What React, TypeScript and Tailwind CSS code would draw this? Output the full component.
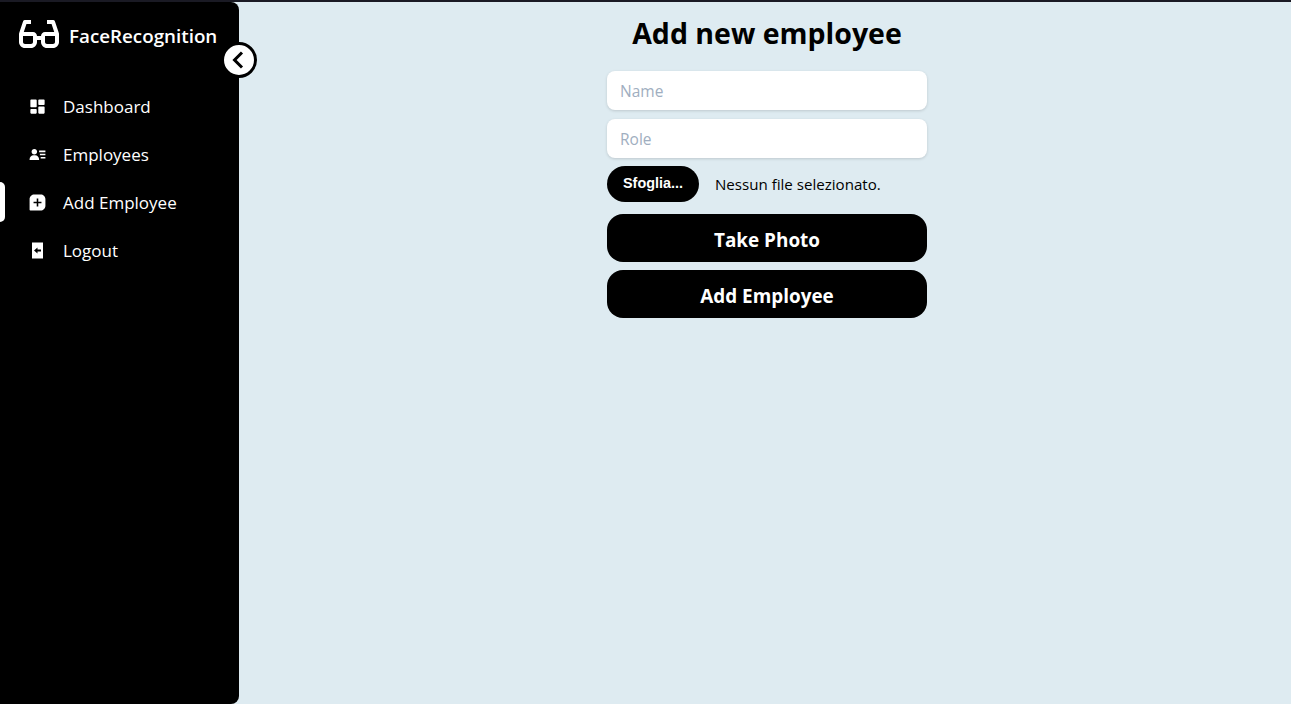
import { BiChevronLeft, BiGlassesAlt, BiSolidDashboard, BiSolidMessageSquareAdd, BiSolidUserDetail } from 'react-icons/bi';

// white door with the arrow cut out, react-icons has no exact match
function LogoutIcon({ className }: { className?: string }) {
  return (
    <svg viewBox="0 0 19 19" className={className}>
      <rect x="4" y="1.5" width="11" height="16" fill="currentColor" />
      <path d="M6 9.5 9.5 6.5V8.6H13V10.4H9.5V12.5Z" fill="#000" />
    </svg>
  );
}

const navItems = [
  { label: 'Dashboard', icon: BiSolidDashboard },
  { label: 'Employees', icon: BiSolidUserDetail },
  { label: 'Add Employee', icon: BiSolidMessageSquareAdd, active: true },
  { label: 'Logout', icon: LogoutIcon },
];

function Sidebar() {
  return (
    <aside className="relative w-[239px] shrink-0 rounded-r-lg bg-black text-white">
      <div className="flex h-[65px] items-center pl-[15px]">
        <BiGlassesAlt className="-mt-[2px] h-[48px] w-[48px]" />
        <span className="ml-[6px] pt-[3px] text-[18.8px] font-semibold">FaceRecognition</span>
      </div>
      <button className="absolute left-[221px] top-[40px] flex h-[36px] w-[36px] items-center justify-center rounded-full border-[3px] border-black bg-white text-black">
        <BiChevronLeft className="h-[36px] w-[36px] shrink-0" />
      </button>
      <nav className="mt-[19px] flex flex-col gap-2">
        {navItems.map(({ label, icon: Icon, active }) => (
          <a key={label} className="relative flex h-10 items-center pl-[28px] text-[17px]">
            {active && <span className="absolute left-0 top-0 h-10 w-[5px] rounded-r-md bg-white" />}
            <Icon className="h-[19px] w-[19px]" />
            <span className="ml-4 pt-[2px]">{label}</span>
          </a>
        ))}
      </nav>
    </aside>
  );
}

function TextField({ placeholder }: { placeholder: string }) {
  return (
    <input
      placeholder={placeholder}
      className="h-[39px] w-full rounded-lg bg-white px-[13px] text-[15.5px] shadow-[0_1px_3px_rgba(0,0,0,0.15)] outline-none placeholder:text-[#a0aec0]"
    />
  );
}

function BlackButton({ label }: { label: string }) {
  return (
    <button className="h-12 w-full rounded-2xl bg-black pt-[5px] text-[18.9px] font-bold text-white">{label}</button>
  );
}

export default function App() {
  return (
    <div className="flex h-screen overflow-hidden border-t-2 border-[#1a1a24] bg-[#deebf1] font-['Open_Sans','Noto_Sans',sans-serif]">
      <Sidebar />
      <main className="flex flex-1 flex-col items-center pl-1">
        <h1 className="mt-[11px] text-[28.5px] font-bold leading-10 text-black">Add new employee</h1>
        <div className="mt-[18px] flex w-[320px] flex-col">
          <TextField placeholder="Name" />
          <div className="mt-[9px]">
            <TextField placeholder="Role" />
          </div>
          <div className="mt-2 flex items-center">
            <button className="h-9 w-[92px] rounded-full bg-black font-['Liberation_Sans',sans-serif] text-[14.4px] font-bold text-white">
              Sfoglia...
            </button>
            <span className="ml-4 text-[15.1px] text-black">Nessun file selezionato.</span>
          </div>
          <div className="mt-3 flex flex-col gap-2">
            <BlackButton label="Take Photo" />
            <BlackButton label="Add Employee" />
          </div>
        </div>
      </main>
    </div>
  );
}
